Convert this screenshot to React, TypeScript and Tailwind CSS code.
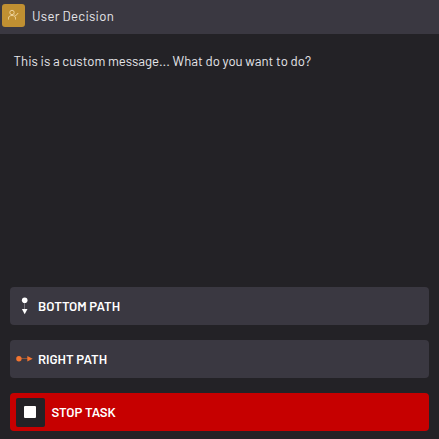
import type { ReactNode } from "react";

function ActionButton({ icon, label, className }: { icon: ReactNode; label: string; className: string }) {
  return (
    <button className={`flex h-[38px] w-full items-center rounded-[4px] text-left text-[13.2px] font-semibold text-white ${className}`}>
      {icon}
      <span className="pt-0.5">{label}</span>
    </button>
  );
}

function BottomPathIcon() {
  return (
    <svg className="ml-[7px] mr-[5px] h-[18px] w-4 shrink-0" viewBox="0 0 16 18">
      <path d="M7.5 3v10" stroke="#77757c" strokeWidth="1" />
      <circle cx="7.7" cy="3.2" r="2.8" fill="#fff" />
      <path d="M4.9 12h5.6L7.7 17.2z" fill="#fff" />
    </svg>
  );
}

function RightPathIcon() {
  return (
    <svg className="ml-[6px] mr-[5px] h-4 w-[17px] shrink-0" viewBox="0 0 17 16">
      <path d="M3 7.5h9" stroke="#8f5437" strokeWidth="1" />
      <circle cx="2.9" cy="7.8" r="2.7" fill="#f47530" />
      <path d="M11.3 5v5.6l5.4-2.8z" fill="#f47530" />
    </svg>
  );
}

export default function App() {
  return (
    <main className="flex h-[439px] w-[439px] flex-col overflow-hidden bg-[#232226] font-['Barlow','Roboto',sans-serif] text-[13.2px] text-[#e6e6ea]">
      <header className="flex h-[34px] shrink-0 items-center bg-[#3a3841] pl-[2px]">
        <span className="mb-1 flex h-[23px] w-[23px] items-center justify-center rounded-[3px] bg-[#c09032]">
          <svg className="mb-px mr-px h-[12px] w-[12px]" viewBox="0 0 12 12" fill="none" stroke="#efd49b" strokeWidth="1">
            <circle cx="5" cy="3.5" r="2.2" />
            <path d="M1.5 10.5V9.2C1.5 7.4 3 6.5 5 6.5s3.5.9 3.5 2.7v1.3M7.4 5.8l1.3 1L11.2 4" />
          </svg>
        </span>
        <h1 className="ml-[7px] tracking-[0.25px]">User Decision</h1>
      </header>
      <p className="pl-[13.5px] pt-[17px] leading-5 tracking-[0.015px]">This is a custom message... What do you want to do?</p>
      <div className="mt-auto flex flex-col gap-[15px] pb-2 pl-[10px] pr-[10px]">
        <ActionButton className="bg-[#3a3841]" icon={<BottomPathIcon />} label="BOTTOM PATH" />
        <ActionButton className="bg-[#3a3841]" icon={<RightPathIcon />} label="RIGHT PATH" />
        <ActionButton
          className="bg-[#c60000]"
          icon={
            <span className="ml-[5.5px] mr-[7px] flex h-[29px] w-[29px] items-center justify-center rounded-[2px] bg-[#232226]">
              <span className="h-[11.5px] w-[11.5px] rounded-[1px] bg-white" />
            </span>
          }
          label="STOP TASK"
        />
      </div>
    </main>
  );
}
